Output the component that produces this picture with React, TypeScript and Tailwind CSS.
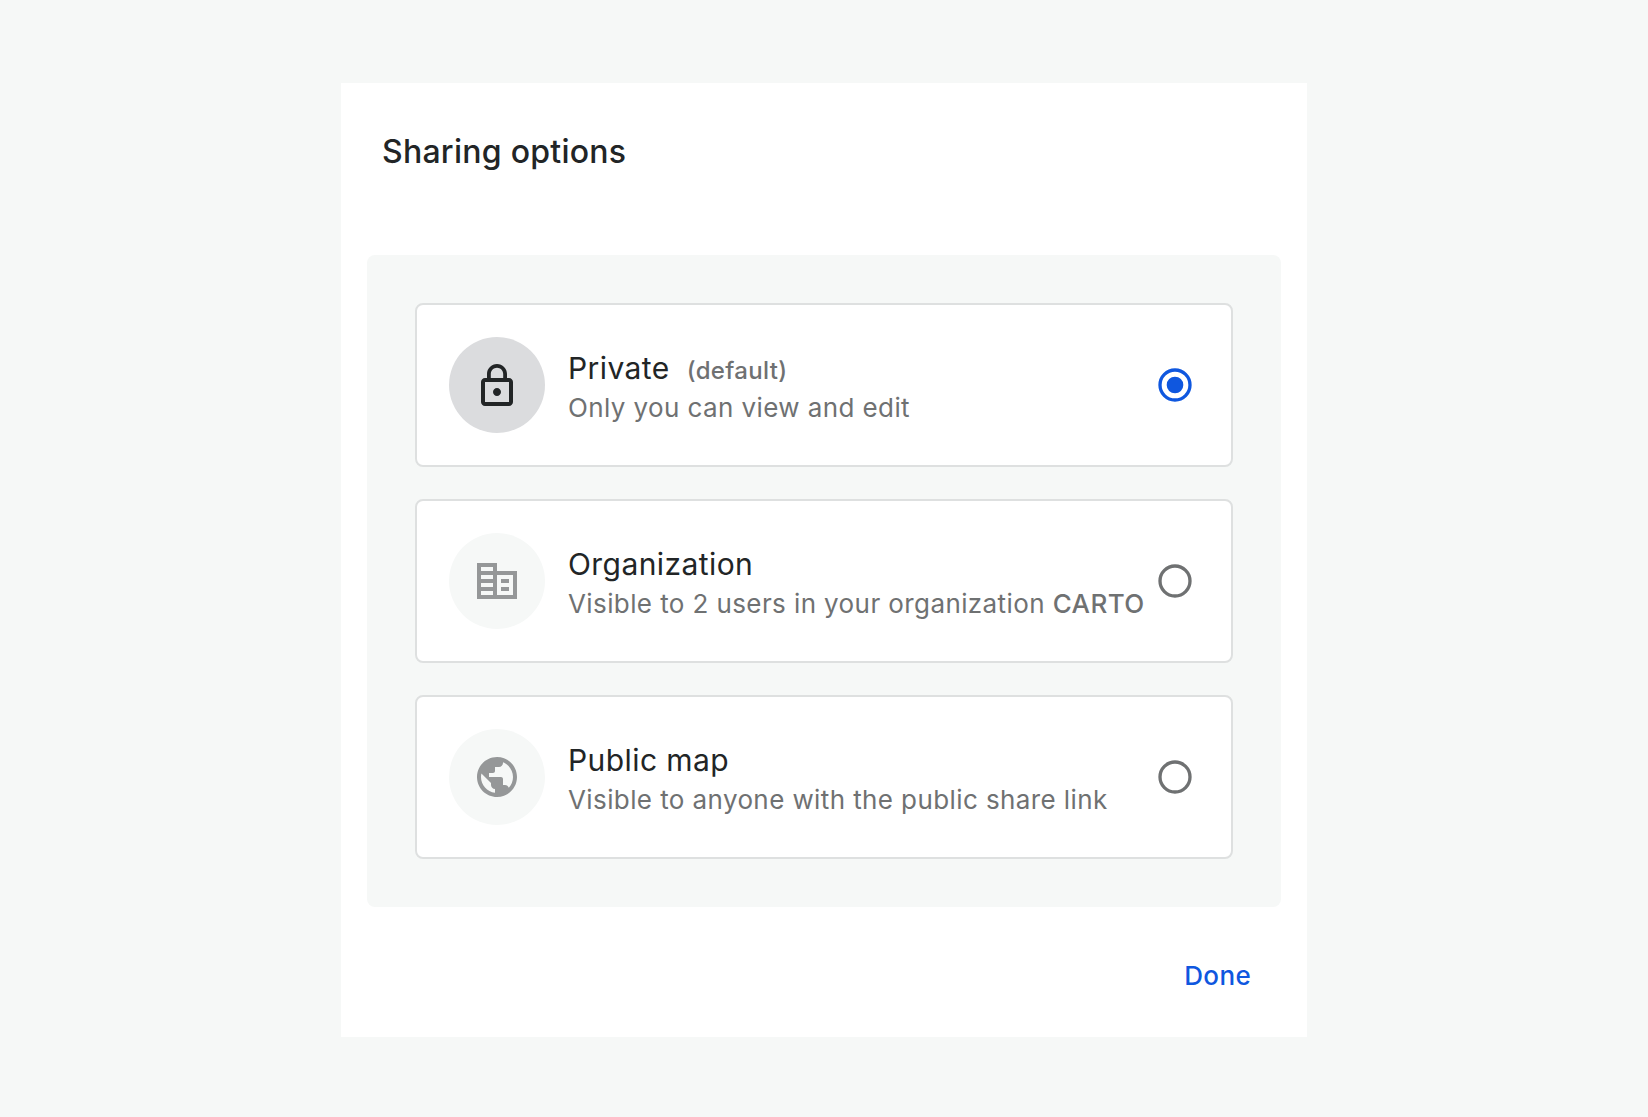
import React from "react";
import { MdLockOutline, MdPublic } from "react-icons/md";

function Building() {
  return (
    <svg viewBox="0 0 24 24" className="size-12 fill-[#959798]">
      <path fillRule="evenodd" d="M12 7V3H2v18h20V7H12zM10 19H4v-2h6v2zm0-4H4v-2h6v2zm0-4H4V9h6v2zm0-4H4V5h6v2zM20 19h-8V9h8v10z" />
      <path d="M14 11h4v2h-4zM14 15h4v2h-4z" />
    </svg>
  );
}

function Radio({ selected }: { selected: boolean }) {
  return (
    <svg viewBox="0 0 24 24" className={`size-10 shrink-0 ${selected ? "text-[#0f57df]" : "text-[#6f7172]"}`} fill="none">
      <circle cx="12" cy="12" r="9" stroke="currentColor" strokeWidth="2" />
      {selected && <circle cx="12" cy="12" r="5" fill="currentColor" />}
    </svg>
  );
}

function Option({ icon, title, note, children, selected = false }: { icon: React.ReactNode; title: string; note?: string; children: React.ReactNode; selected?: boolean }) {
  return (
    <div className="flex h-[164px] items-center rounded-lg border-2 border-[#dee0e0] bg-white pl-8 pr-9">
      <div className={`flex size-24 shrink-0 items-center justify-center rounded-full ${selected ? "bg-[#dbdcde]" : "bg-[#f6f8f7]"}`}>{icon}</div>
      <div className="ml-[23px] flex-1 whitespace-nowrap pt-1.5">
        <div className="flex h-10 items-baseline text-[30px] leading-10 tracking-[0.42px] text-[#222526]">
          {title}
          {note && <span className="ml-[17px] text-[24px] font-medium tracking-[0.34px] text-[#6f7172]">{note}</span>}
        </div>
        <div className="h-10 text-[26px] leading-10 tracking-[0.4px] text-[#6f7172]">{children}</div>
      </div>
      <Radio selected={selected} />
    </div>
  );
}

export default function App() {
  return (
    <main className="flex h-[1117px] justify-center bg-[#f6f8f7] pt-[83px] [font-family:Inter,sans-serif]">
      <section className="h-[954px] w-[966px] bg-white px-[26px] pt-[45px]">
        <h1 className="ml-[15px] h-[127px] text-[32px] font-medium leading-[48px] tracking-[0.26px] text-[#222526]">Sharing options</h1>
        <div className="flex h-[652px] flex-col gap-8 rounded-lg bg-[#f6f8f7] p-12">
          <Option selected icon={<MdLockOutline className="mt-0.5 size-12 text-[#222526]" />} title="Private" note="(default)">Only you can view and edit</Option>
          <Option icon={<Building />} title="Organization">Visible to 2 users in your organization <strong className="font-medium">CARTO</strong></Option>
          <Option icon={<MdPublic className="size-12 text-[#959798]" />} title="Public map">Visible to anyone with the public share link</Option>
        </div>
        <div className="flex justify-end pr-[30px] pt-[49px]">
          <button className="text-[26px] font-medium leading-10 tracking-[0.35px] text-[#0f57df]">Done</button>
        </div>
      </section>
    </main>
  );
}
